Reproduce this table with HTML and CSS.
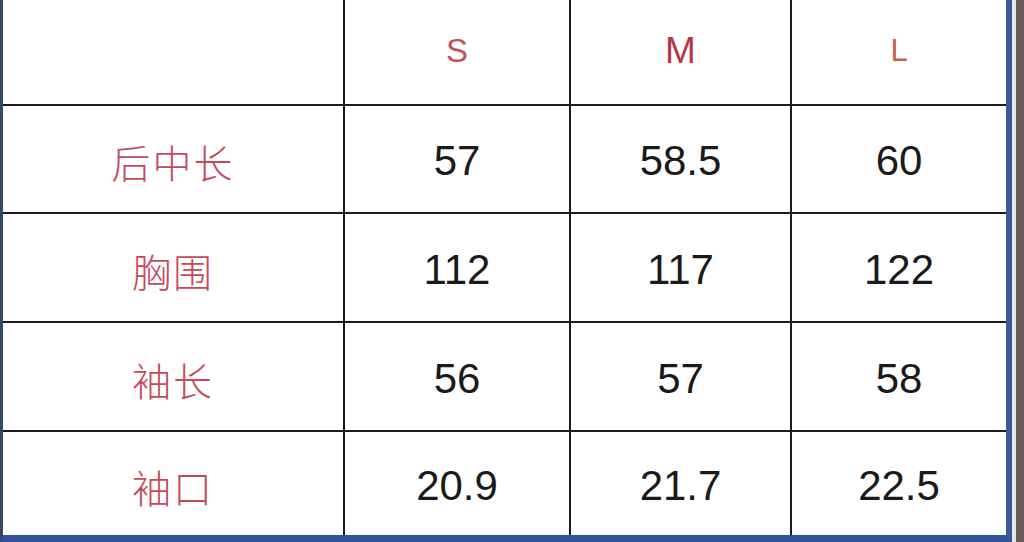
FILE: index.html
```html
<!DOCTYPE html>
<html lang="zh">
<head>
<meta charset="utf-8">
<title>尺码表</title>
<link rel="stylesheet" href="styles.css">
</head>
<body>
<div class="screen">
  <div class="sheet">
    <div class="cell"></div>
    <div class="cell head">S</div>
    <div class="cell head head-m">M</div>
    <div class="cell head head-l">L</div>

    <div class="cell label">后中长</div>
    <div class="cell num">57</div>
    <div class="cell num">58.5</div>
    <div class="cell num">60</div>

    <div class="cell label">胸围</div>
    <div class="cell num">112</div>
    <div class="cell num">117</div>
    <div class="cell num">122</div>

    <div class="cell label">袖长</div>
    <div class="cell num">56</div>
    <div class="cell num">57</div>
    <div class="cell num">58</div>

    <div class="cell label">袖口</div>
    <div class="cell num">20.9</div>
    <div class="cell num">21.7</div>
    <div class="cell num">22.5</div>
  </div>
  <div class="gap"></div>
  <div class="edge"></div>
</div>
</body>
</html>
```

FILE: styles.css
```css
html, body {
  margin: 0;
  padding: 0;
  background: #ffffff;
}

.screen {
  display: flex;
  width: 1024px;
  height: 542px;
  overflow: hidden;
}

.sheet {
  box-sizing: border-box;
  width: 1012px;
  height: 542px;
  border-left: 3px solid #34466a;
  border-right: 6px solid #3a5a8e;
  border-bottom: 7px solid #2f5394;
  background: #1c1c1c;
  display: grid;
  grid-template-columns: 340px 224px 219px 214px;
  grid-template-rows: 104px 106px 107px 107px 103px;
  gap: 2px;
}

.cell {
  background: #ffffff;
  display: flex;
  align-items: center;
  justify-content: center;
}

.head {
  font-family: "Liberation Sans", Arial, sans-serif;
  font-size: 33px;
  color: #c4505a;
  padding-bottom: 2px;
}

.head-m {
  font-size: 37px;
  color: #b83548;
}

.head-l {
  color: #c8604f;
  font-size: 31px;
}

.label {
  font-family: "Noto Sans CJK SC", sans-serif;
  font-weight: 300;
  font-size: 39px;
  letter-spacing: 2px;
  color: #c44a5a;
  padding-top: 4px;
}

.num {
  font-family: "Liberation Sans", Arial, sans-serif;
  font-size: 42px;
  color: #1a1a1a;
  padding-top: 4px;
}

.gap {
  width: 4px;
  background: #e4e6ee;
}

.edge {
  flex: 1;
  background: #6b5b57;
}
```
